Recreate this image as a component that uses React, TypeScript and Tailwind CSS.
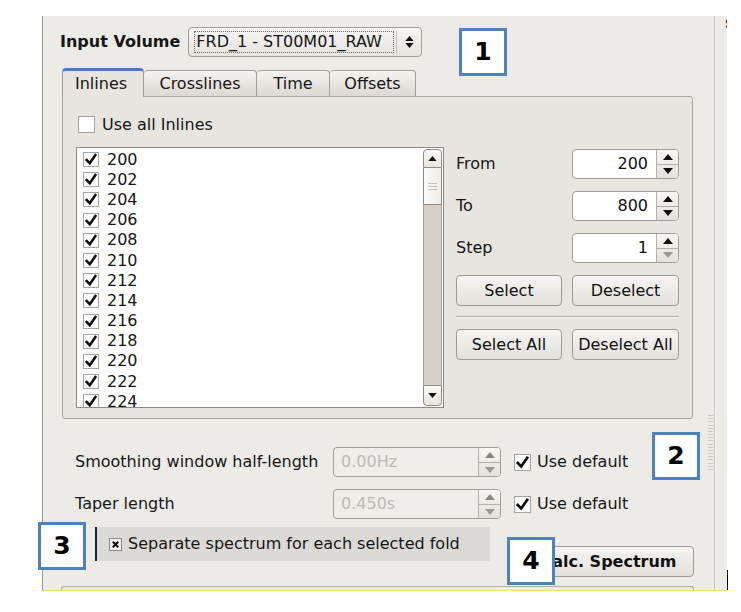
import React from 'react';

const inlines = [200, 202, 204, 206, 208, 210, 212, 214, 216, 218, 220, 222, 224];

function Tick({ className = '' }: { className?: string }) {
  return (
    <svg viewBox="0 0 16 16" className={className}>
      <path d="M3 8.5 L6.6 12.2 L13 3" fill="none" stroke="#111" strokeWidth="2.9" strokeLinecap="square" />
    </svg>
  );
}

function CheckBox({ checked }: { checked: boolean }) {
  return (
    <span className="w-[17px] h-[17px] border border-[#a7a39e] bg-white flex items-center justify-center shrink-0">
      {checked && <Tick className="w-[15px] h-[15px]" />}
    </span>
  );
}

function Arrows({ disabled = false, lowerDim = false }: { disabled?: boolean; lowerDim?: boolean }) {
  const up = disabled ? '#8a8783' : '#111';
  const down = disabled || lowerDim ? '#9a9793' : '#111';
  return (
    <div className="w-[22px] flex flex-col border-l border-[#b3afaa] bg-gradient-to-b from-[#f7f6f4] to-[#e4e1dd]">
      <div className="flex-1 flex items-center justify-center border-b border-[#b3afaa]">
        <svg viewBox="0 0 10 6" className="w-[10px] h-[6px]">
          <path d="M0 6 L5 0 L10 6 Z" fill={up} />
        </svg>
      </div>
      <div className="flex-1 flex items-center justify-center">
        <svg viewBox="0 0 10 6" className="w-[10px] h-[6px]">
          <path d="M0 0 L5 6 L10 0 Z" fill={down} />
        </svg>
      </div>
    </div>
  );
}

function SpinBox({ value, width, disabled = false, lowerDim = false }: { value: string; width: number; disabled?: boolean; lowerDim?: boolean }) {
  return (
    <div
      className={
        'h-[30px] flex rounded-[4px] border border-[#a29e99] overflow-hidden ' +
        (disabled ? 'bg-[#efedea]' : 'bg-white')
      }
      style={{ width }}
    >
      <div
        className={
          'flex-1 flex items-center ' +
          (disabled ? 'justify-start pl-[7px] text-[#bdb9b4]' : 'justify-end pr-[8px] text-[#111]')
        }
      >
        {value}
      </div>
      <Arrows disabled={disabled} lowerDim={lowerDim} />
    </div>
  );
}

function Button({ label, width, bold = false }: { label: string; width: number; bold?: boolean }) {
  return (
    <div
      className={
        'h-[31px] rounded-[4px] border border-[#9d9994] bg-gradient-to-b from-[#f6f5f3] to-[#e3e0dc] flex items-center justify-center text-[#111] ' +
        (bold ? 'font-bold' : '')
      }
      style={{ width }}
    >
      {label}
    </div>
  );
}

function Marker({ n, className }: { n: string; className: string }) {
  return (
    <div
      className={
        'absolute w-[48px] h-[48px] border-[3px] border-[#4f81bd] bg-white flex items-center justify-center font-bold text-[25px] text-black ' +
        className
      }
    >
      {n}
    </div>
  );
}

export default function App() {
  return (
    <div className="w-[741px] h-[612px] bg-white relative overflow-hidden font-['DejaVu_Sans',sans-serif] text-[16px] text-[#161616]">
      <div className="ml-[42px] mt-[16px] w-[685px] h-[575px] bg-[#edebe7] border-l border-[#9f9c97] border-b border-b-[#efe36a] flex relative">
        {/* main dialog area */}
        <div className="w-[671px] flex flex-col">
          {/* input volume */}
          <div className="mt-[11px] pl-[17px] h-[30px] flex items-center">
            <span className="font-bold">Input Volume</span>
            <div className="ml-[8px] w-[234px] h-[30px] rounded-[4px] border border-[#a29e99] bg-gradient-to-b from-[#f7f6f4] to-[#e6e3df] flex items-center">
              <div className="ml-[5px] w-[200px] h-[22px] border border-dotted border-[#6d6a66] flex items-center pl-[1px] whitespace-nowrap">
                FRD_1 - ST00M01_RAW
              </div>
              <div className="ml-[2px] w-px h-[22px] bg-[#c3bfba]" />
              <div className="flex-1 flex flex-col items-center gap-[2px]">
                <svg viewBox="0 0 10 6" className="w-[9px] h-[5px]">
                  <path d="M0 6 L5 0 L10 6 Z" fill="#111" />
                </svg>
                <svg viewBox="0 0 10 6" className="w-[9px] h-[5px]">
                  <path d="M0 0 L5 6 L10 0 Z" fill="#111" />
                </svg>
              </div>
            </div>
          </div>

          {/* tabs */}
          <div className="mt-[11px] ml-[19px] h-[28px] flex items-end relative z-10">
            <div className="w-[82px] h-[29px] -mb-px rounded-t-[4px] border border-[#a29e99] border-b-0 border-t-[3px] border-t-[#4d7fb6] bg-[#e8e5e1] flex items-center pl-[12px]">
              Inlines
            </div>
            {[
              ['Crosslines', 113],
              ['Time', 73],
              ['Offsets', 86],
            ].map(([t, w]) => (
              <div
                key={t as string}
                className="h-[26px] rounded-t-[4px] border border-[#a29e99] border-l-0 border-b-0 bg-gradient-to-b from-[#f5f3f1] to-[#dcd8d3] flex items-center justify-center"
                style={{ width: w as number }}
              >
                {t}
              </div>
            ))}
          </div>

          {/* tab pane */}
          <div className="ml-[19px] w-[631px] h-[325px] bg-[#e8e5e1] border border-[#a9a5a0] rounded-b-[3px] rounded-tr-[3px] pl-[13px] pt-[19px]">
            <div className="ml-[2px] flex items-center gap-[7px] h-[17px]">
              <CheckBox checked={false} />
              <span>Use all Inlines</span>
            </div>
            <div className="mt-[14px] flex gap-[12px]">
              {/* list */}
              <div className="w-[368px] h-[261px] bg-white border border-[#8e8a85] flex">
                <div className="flex-1 pt-[1.5px] pl-[6px] overflow-hidden">
                  {inlines.map((v) => (
                    <div key={v} className="h-[20.2px] flex items-center gap-[8px] shrink-0">
                      <span className="w-[16px] h-[15px] border border-[#aaa6a1] flex items-center justify-center">
                        <Tick className="w-[15px] h-[15px]" />
                      </span>
                      <span className="leading-none">{v}</span>
                    </div>
                  ))}
                </div>
                {/* scrollbar */}
                <div className="w-[19px] my-px mr-px flex flex-col">
                  <div className="h-[19px] rounded-t-[4px] border border-[#8f8b86] bg-gradient-to-b from-[#fbfaf9] to-[#e8e5e1] flex items-center justify-center">
                    <svg viewBox="0 0 10 6" className="w-[9px] h-[5px]">
                      <path d="M0 6 L5 0 L10 6 Z" fill="#111" />
                    </svg>
                  </div>
                  <div className="h-[37px] border-x border-b border-[#8f8b86] bg-gradient-to-r from-[#fdfcfb] to-[#eeebe8] flex flex-col items-center justify-center gap-[2px]">
                    <div className="w-[9px] h-px bg-[#c2beb9]" />
                    <div className="w-[9px] h-px bg-[#c2beb9]" />
                    <div className="w-[9px] h-px bg-[#c2beb9]" />
                  </div>
                  <div className="flex-1 bg-[#d8d0c8] border-x border-[#a8a29b]" />
                  <div className="h-[21px] rounded-b-[4px] border border-[#8f8b86] bg-gradient-to-b from-[#fbfaf9] to-[#e8e5e1] flex items-center justify-center">
                    <svg viewBox="0 0 10 6" className="w-[9px] h-[5px]">
                      <path d="M0 0 L5 6 L10 0 Z" fill="#111" />
                    </svg>
                  </div>
                </div>
              </div>

              {/* range controls */}
              <div className="w-[223px] pt-[2px] flex flex-col">
                {[
                  ['From', '200', false],
                  ['To', '800', false],
                  ['Step', '1', true],
                ].map(([l, v, dim], i) => (
                  <div key={l as string} className={'flex items-center ' + (i > 0 ? 'mt-[12px]' : '')}>
                    <span className="w-[116px]">{l}</span>
                    <SpinBox value={v as string} width={107} lowerDim={dim as boolean} />
                  </div>
                ))}
                <div className="mt-[12px] flex gap-[10px]">
                  <Button label="Select" width={106} />
                  <Button label="Deselect" width={107} />
                </div>
                <div className="mt-[10px] h-[2px] border-t border-[#aeaaa5] border-b border-b-[#f8f7f5]" />
                <div className="mt-[11px] flex gap-[10px]">
                  <Button label="Select All" width={106} />
                  <Button label="Deselect All" width={107} />
                </div>
              </div>
            </div>
          </div>

          {/* smoothing / taper */}
          {[
            ['Smoothing window half-length', '0.00Hz', 'mt-[28px]'],
            ['Taper length', '0.450s', 'mt-[12px]'],
          ].map(([l, v, m]) => (
            <div key={l} className={'ml-[32px] h-[30px] flex items-center ' + m}>
              <span className="w-[258px] whitespace-nowrap">{l}</span>
              <SpinBox value={v} width={168} disabled />
              <div className="ml-[13px] flex items-center gap-[6px]">
                <CheckBox checked />
                <span>Use default</span>
              </div>
            </div>
          ))}

          {/* separate spectrum + calc */}
          <div className="mt-[8px] h-[50px] flex">
            <div className="ml-[52px] w-[395px] h-[34px] bg-[#dcdad7] border-l-2 border-[#1b1f4a] flex items-center pl-[12px] gap-[6px]">
              <span className="w-[13px] h-[13px] border border-[#8b8884] bg-[#f4f3f1] flex items-center justify-center">
                <svg viewBox="0 0 10 10" className="w-[9px] h-[9px]">
                  <path d="M2 2 L8 8 M8 2 L2 8" stroke="#111" strokeWidth="2.2" />
                </svg>
              </span>
              <span className="whitespace-nowrap">Separate spectrum for each selected fold</span>
            </div>
            <div className="ml-[33px] self-end">
              <Button label="Calc. Spectrum" width={171} bold />
            </div>
          </div>

          {/* next group box */}
          <div className="mt-[9px] ml-[18px] w-[633px] h-[4px] border-t border-x border-[#b0aca7] rounded-t-[3px]" />
        </div>

        {/* right neighbour panel edge */}
        <div className="flex-1 border-l border-[#c4c0bb] relative overflow-hidden">
          <div className="w-px h-full bg-[#faf9f8]" />
          <span className="absolute left-[10px] top-[1px] font-bold text-[13px] leading-none">S</span>
        </div>

        {/* splitter grip */}
        <div className="absolute left-[665px] top-[399px] w-[5px] h-[55px] flex flex-col justify-between">
          {Array.from({ length: 18 }).map((_, i) => (
            <div key={i} className="h-px bg-[#c9c5c0]" />
          ))}
        </div>
        <div className="absolute right-[-1px] bottom-0 w-px h-[20px] bg-black" />
      </div>

      <Marker n="1" className="left-[459px] top-[28px]" />
      <Marker n="2" className="left-[652px] top-[432px]" />
      <Marker n="3" className="left-[38px] top-[522px] w-[46px] h-[47px]" />
      <Marker n="4" className="left-[507px] top-[537px]" />
    </div>
  );
}
